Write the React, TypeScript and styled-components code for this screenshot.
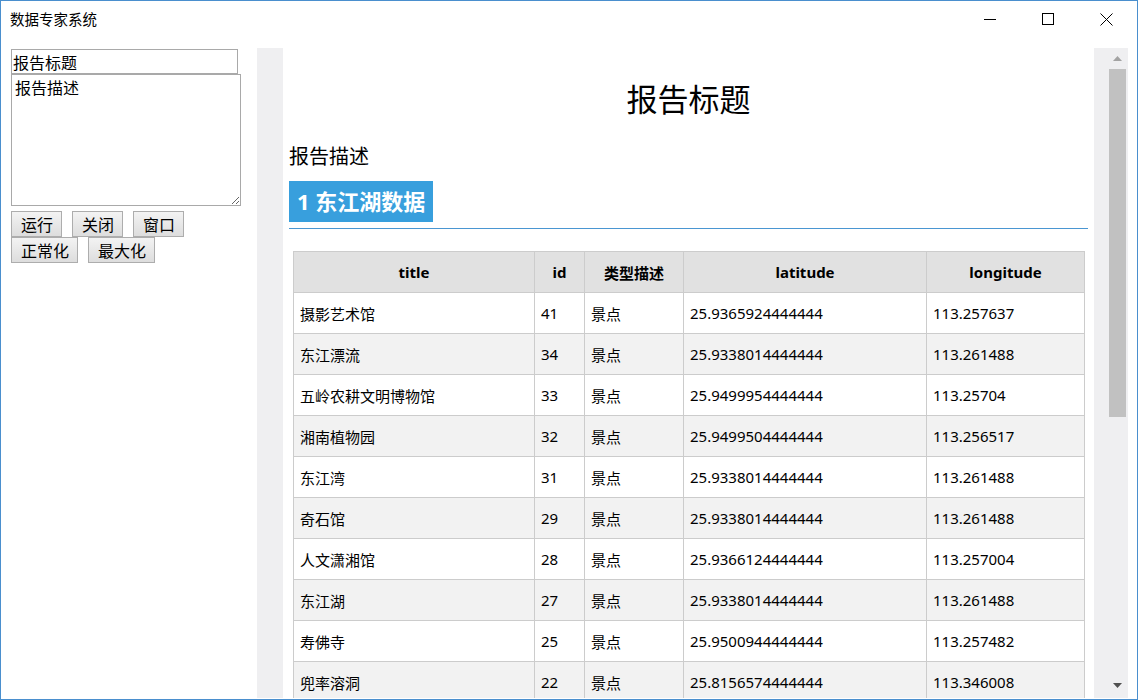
import styled, { createGlobalStyle } from 'styled-components';

const GlobalStyle = createGlobalStyle`
  html, body { margin: 0; padding: 0; background: #fff; }
  * { box-sizing: border-box; }
`;

const cjk = `"Noto Sans", "Noto Sans CJK SC", sans-serif`;
const ui = `"Noto Sans CJK SC", "Noto Sans", sans-serif`;

interface Spot {
  title: string;
  id: number;
  kind: string;
  lat: string;
  lng: string;
}

const rows: Spot[] = [
  { title: '摄影艺术馆', id: 41, kind: '景点', lat: '25.9365924444444', lng: '113.257637' },
  { title: '东江漂流', id: 34, kind: '景点', lat: '25.9338014444444', lng: '113.261488' },
  { title: '五岭农耕文明博物馆', id: 33, kind: '景点', lat: '25.9499954444444', lng: '113.25704' },
  { title: '湘南植物园', id: 32, kind: '景点', lat: '25.9499504444444', lng: '113.256517' },
  { title: '东江湾', id: 31, kind: '景点', lat: '25.9338014444444', lng: '113.261488' },
  { title: '奇石馆', id: 29, kind: '景点', lat: '25.9338014444444', lng: '113.261488' },
  { title: '人文潇湘馆', id: 28, kind: '景点', lat: '25.9366124444444', lng: '113.257004' },
  { title: '东江湖', id: 27, kind: '景点', lat: '25.9338014444444', lng: '113.261488' },
  { title: '寿佛寺', id: 25, kind: '景点', lat: '25.9500944444444', lng: '113.257482' },
  { title: '兜率溶洞', id: 22, kind: '景点', lat: '25.8156574444444', lng: '113.346008' },
];

const columns = [
  { key: 'title', label: 'title', width: 241 },
  { key: 'id', label: 'id', width: 50 },
  { key: 'kind', label: '类型描述', width: 99 },
  { key: 'lat', label: 'latitude', width: 243 },
  { key: 'lng', label: 'longitude', width: 158 },
];

export default function App() {
  return (
    <>
      <GlobalStyle />
      <Window>
        <TitleBar>
          <WindowTitle>数据专家系统</WindowTitle>
          <Controls>
            <CtrlButton>
              <svg width="12" height="12" viewBox="0 0 12 12">
                <line x1="0" y1="6.5" x2="12" y2="6.5" stroke="#000" strokeWidth="1" />
              </svg>
            </CtrlButton>
            <CtrlButton>
              <svg width="12" height="12" viewBox="0 0 12 12">
                <rect x="0.5" y="0.5" width="11" height="11" fill="none" stroke="#000" strokeWidth="1" />
              </svg>
            </CtrlButton>
            <CtrlButton>
              <svg width="13" height="13" viewBox="0 0 13 13">
                <path d="M0.5 0.5 L12.5 12.5 M12.5 0.5 L0.5 12.5" stroke="#000" strokeWidth="1" />
              </svg>
            </CtrlButton>
          </Controls>
        </TitleBar>

        <Main>
          <Side>
            <TitleInput defaultValue="报告标题" />
            <DescArea defaultValue="报告描述" />
            <ButtonRow>
              <ActionButton>运行</ActionButton>
              <ActionButton>关闭</ActionButton>
              <ActionButton>窗口</ActionButton>
            </ButtonRow>
            <ButtonRow $tight>
              <ActionButton>正常化</ActionButton>
              <ActionButton>最大化</ActionButton>
            </ButtonRow>
          </Side>

          <WebView>
            <Gutter />
            <Page>
              <ReportTitle>报告标题</ReportTitle>
              <ReportDesc>报告描述</ReportDesc>
              <Section>
                <SectionLabel>1 东江湖数据</SectionLabel>
              </Section>
              <DataTable>
                <colgroup>
                  {columns.map(c => <col key={c.key} style={{ width: c.width }} />)}
                </colgroup>
                <thead>
                  <tr>
                    {columns.map(c => <Th key={c.key}>{c.label}</Th>)}
                  </tr>
                </thead>
                <tbody>
                  {rows.map(r => (
                    <Tr key={r.id}>
                      <Td>{r.title}</Td>
                      <Td>{r.id}</Td>
                      <Td>{r.kind}</Td>
                      <Td>{r.lat}</Td>
                      <Td>{r.lng}</Td>
                    </Tr>
                  ))}
                </tbody>
              </DataTable>
            </Page>
            <ScrollBar>
              <Arrow>
                <svg width="9" height="5" viewBox="0 0 9 5">
                  <polygon points="4.5,0 9,5 0,5" fill="#a3a3a3" />
                </svg>
              </Arrow>
              <Thumb />
              <Arrow $down>
                <svg width="9" height="5" viewBox="0 0 9 5">
                  <polygon points="0,0 9,0 4.5,5" fill="#505050" />
                </svg>
              </Arrow>
            </ScrollBar>
          </WebView>
        </Main>
      </Window>
    </>
  );
}

const Window = styled.div`
  width: 1138px;
  height: 700px;
  border: 1px solid #4a8fce;
  background: #fff;
  display: flex;
  flex-direction: column;
  overflow: hidden;
`;

const TitleBar = styled.div`
  height: 39px;
  display: flex;
  align-items: center;
  flex-shrink: 0;
  padding-bottom: 3px;
`;

const WindowTitle = styled.div`
  padding-left: 9px;
  font-family: ${ui};
  font-size: 14.5px;
  line-height: 20px;
  color: #000;
`;

const Controls = styled.div`
  margin-left: auto;
  margin-right: 2px;
  display: flex;
  height: 100%;
`;

const CtrlButton = styled.div`
  width: 58px;
  height: 100%;
  display: flex;
  align-items: center;
  justify-content: center;
`;

const Main = styled.div`
  flex: 1;
  min-height: 0;
  display: flex;
  padding-top: 8px;
`;

const Side = styled.div`
  width: 256px;
  flex-shrink: 0;
  padding-left: 10px;
  font-family: ${ui};
`;

const TitleInput = styled.input`
  display: block;
  width: 227px;
  height: 25px;
  margin: 1px 0 0;
  padding: 0 1px;
  border: 1px solid #a9a9a9;
  font-family: ${ui};
  font-size: 16px;
  color: #000;
  outline: none;
`;

const DescArea = styled.textarea`
  display: block;
  width: 230px;
  height: 132px;
  margin: 0;
  padding: 1px 3px;
  border: 1px solid #a9a9a9;
  font-family: ${ui};
  font-size: 16px;
  line-height: 22px;
  color: #000;
  outline: none;
`;

const ButtonRow = styled.div<{ $tight?: boolean }>`
  display: flex;
  gap: 10px;
  margin-top: ${p => (p.$tight ? 0 : 5)}px;
`;

const ActionButton = styled.button`
  height: 26px;
  padding: 0 8px 0 9px;
  border: 1px solid #adadad;
  border-radius: 0;
  background: linear-gradient(#f3f3f3, #dddddd);
  font-family: ${ui};
  font-size: 16px;
  line-height: 22px;
  color: #000;
`;

const WebView = styled.div`
  width: 871px;
  height: 650px;
  display: flex;
  flex-shrink: 0;
`;

const Gutter = styled.div`
  width: 26px;
  background: #efeff1;
`;

const Page = styled.div`
  width: 811px;
  background: #fff;
  overflow: hidden;
  padding: 0 6px;
  font-family: ${cjk};
  color: #000;
`;

const ReportTitle = styled.h1`
  margin: 31px 0 0;
  text-align: center;
  font-family: ${ui};
  font-weight: 400;
  font-size: 31px;
  line-height: 38px;
`;

const ReportDesc = styled.div`
  margin-top: 27px;
  font-family: ${ui};
  font-size: 20px;
  line-height: 24px;
`;

const Section = styled.div`
  margin-top: 13px;
  padding-bottom: 6px;
  border-bottom: 1px solid #4a96d2;
`;

const SectionLabel = styled.span`
  display: inline-block;
  height: 41px;
  padding: 0 8px 0 8px;
  background: #389fdd;
  color: #fff;
  font-family: ${cjk};
  font-weight: 700;
  font-size: 22px;
  line-height: 41px;
`;

const DataTable = styled.table`
  margin: 22px 0 0 4px;
  width: 791px;
  table-layout: fixed;
  border-collapse: collapse;
  font-size: 15px;
`;

const Th = styled.th`
  height: 41px;
  padding: 0 6px;
  border: 1px solid #cccccc;
  background: #e1e1e1;
  font-weight: 700;
  font-size: 15px;
  text-align: center;
  white-space: nowrap;
`;

const Tr = styled.tr`
  &:nth-child(even) td { background: #f2f2f2; }
`;

const Td = styled.td`
  height: 41px;
  padding: 0 6px;
  border: 1px solid #cccccc;
  background: #fff;
  white-space: nowrap;
`;

const ScrollBar = styled.div`
  width: 34px;
  background: #efeff1;
  display: flex;
  flex-direction: column;
  align-items: flex-end;
  padding-right: 2px;
`;

const Arrow = styled.div<{ $down?: boolean }>`
  width: 17px;
  height: 21px;
  display: flex;
  justify-content: center;
  align-items: center;
  margin-top: ${p => (p.$down ? 'auto' : '0')};
  padding-bottom: ${p => (p.$down ? 4 : 0)}px;
`;

const Thumb = styled.div`
  width: 17px;
  height: 348px;
  background: #c1c1c1;
`;
